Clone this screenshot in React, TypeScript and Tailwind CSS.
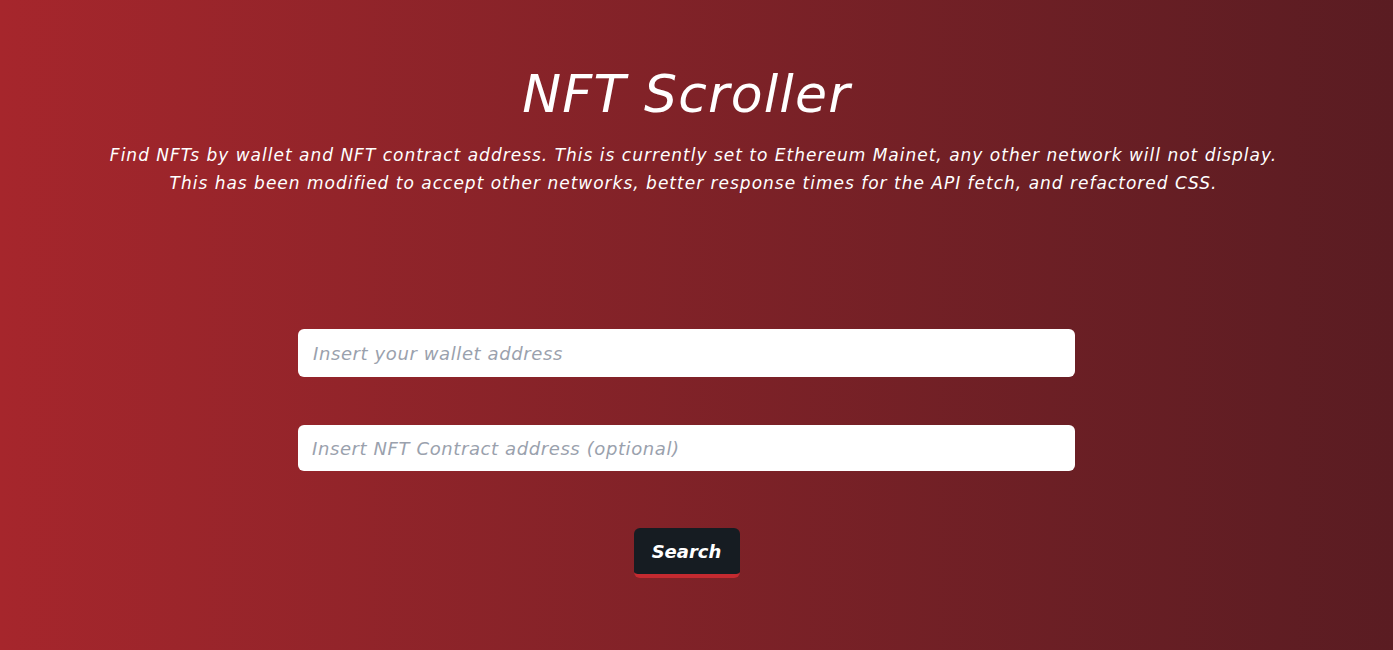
export default function App() {
  return (
    <div className="w-full h-[650px] bg-gradient-to-r from-[#a6262c] to-[#5a1c22] text-white italic font-['DejaVu_Sans',sans-serif] pr-[20px] flex flex-col items-center">
      <h1 className="mt-[59px] text-[52px] leading-[70px] font-normal tracking-[1.2px]">NFT Scroller</h1>
      <p className="mt-[12px] pl-[14px] text-[17px] leading-[28px] text-center tracking-[1px]">
        Find NFTs by wallet and NFT contract address. This is currently set to Ethereum Mainet, any other network will not display.
        <br />
        This has been modified to accept other networks, better response times for the API fetch, and refactored CSS.
      </p>
      <div className="mt-[132px] w-[777px] flex flex-col items-center">
        <input
          className="w-full h-[48px] rounded-[6px] bg-white px-[15px] text-[18px] italic tracking-[0.6px] font-['DejaVu_Sans',sans-serif] text-gray-800 placeholder:text-[#9aa1ad] outline-none"
          placeholder="Insert your wallet address"
        />
        <input
          className="mt-[48px] w-full h-[46px] rounded-[6px] bg-white px-[14px] text-[18px] italic tracking-[0.6px] font-['DejaVu_Sans',sans-serif] text-gray-800 placeholder:text-[#9aa1ad] outline-none"
          placeholder="Insert NFT Contract address (optional)"
        />
        <button className="mt-[57px] w-[106px] h-[50px] rounded-[6px] bg-[#161c22] border-b-[4px] border-[#c42a30] text-white text-[18px] font-bold italic font-['DejaVu_Sans',sans-serif]">
          Search
        </button>
      </div>
    </div>
  );
}
